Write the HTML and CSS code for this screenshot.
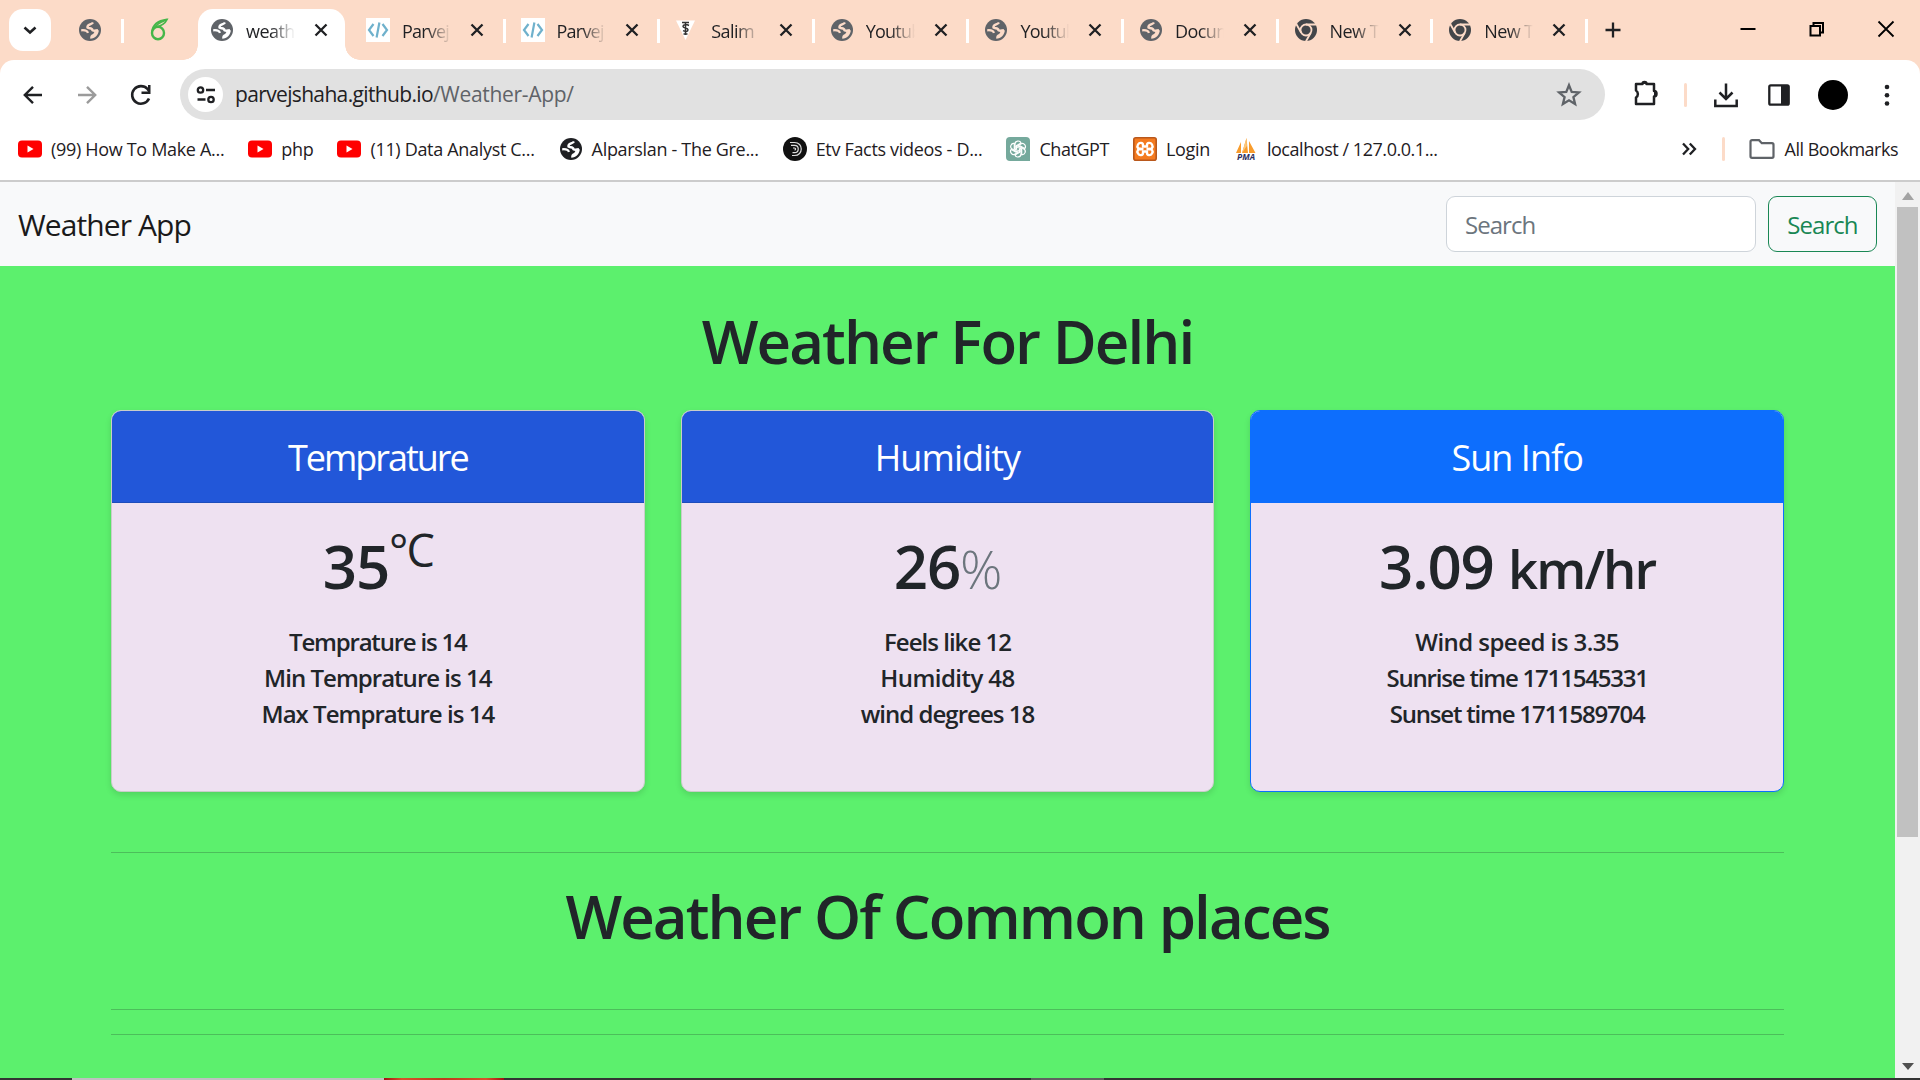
FILE: index.html
```html
<!DOCTYPE html>
<html lang="en">
<head>
<meta charset="utf-8">
<title>weather app</title>
<link rel="stylesheet" href="styles.css">
</head>
<body>
<svg class="defs" aria-hidden="true">
  <symbol id="globe" viewBox="0 0 24 24">
    <circle cx="12" cy="12" r="11" fill="currentColor"/>
    <path class="cutline" d="M15 4.500C13.500 7 9 6 9.500 9.500c1.500 1.300 4.500 0 5 2.700 1.500 1 3.500.5 5.500 0" fill="none" stroke-width="2.400"/>
    <path class="cut" d="M20.800 12.200C20.500 17 17 20.500 12.300 20.800c-.5-2.300.5-4.300 2.700-4.800 1.300-.8.500-3.300 5.800-3.800z"/>
    <path class="cutline" d="M3.200 12.300c3-.3 6-.1 6.700 2.700" fill="none" stroke-width="2.200"/>
  </symbol>
  <symbol id="close" viewBox="0 0 24 24"><path d="M6.500 6.500l11 11M17.500 6.500l-11 11" stroke="#1f2023" stroke-width="2.300" fill="none"/></symbol>
  <symbol id="code" viewBox="0 0 24 24"><path fill="#fff" d="M0 0h24v24H0z"/><path d="M7.500 6L3 12l4.500 6M16.500 6l4.500 6-4.500 6M13.400 4.500l-2.800 15" stroke="#6fb1cc" stroke-width="2.200" fill="none"/></symbol>
  <symbol id="chrome" viewBox="0 0 24 24">
    <circle cx="12" cy="12" r="11" fill="#43464a"/>
    <circle class="cutline" cx="12" cy="12" r="5.500" fill="none" stroke-width="1.800"/>
    <path class="cutline" d="M12 6.500h10M7.200 14.800L2.300 6M16.800 14.700L12 23.300" fill="none" stroke-width="1.800"/>
  </symbol>
  <symbol id="youtube" viewBox="0 0 24 24"><rect y="3.500" width="24" height="17" rx="4" fill="#f00"/><path d="M9.500 8.500v7l6-3.500z" fill="#fff"/></symbol>
</svg>

<header class="browser">
  <div class="tabstrip">
    <div class="tab-search"><svg viewBox="0 0 24 24" width="24" height="24"><path d="M6.500 9.500l5.500 5 5.500-5" fill="none" stroke="#1f2023" stroke-width="2.600"/></svg></div>
    <div class="pinned"><svg class="icon-tab"><use href="#globe"/></svg></div>
    <div class="pinned pinned-last">
      <svg viewBox="0 0 20 24" width="20" height="24" fill="none" stroke="#45b649"><ellipse cx="9" cy="15" rx="6" ry="6.200" stroke-width="2.400"/><path d="M3 14C3.500 8 7 3 18 1.500 16 6 12 8 6.500 9" stroke-width="1.800"/><path d="M16 2.500C12 4 8 6 6 9" stroke-width="1.400"/></svg>
    </div>
    <div class="tab active"><svg class="icon-tab"><use href="#globe"/></svg><span class="tab-title">weather</span><svg class="x"><use href="#close"/></svg></div>
    <div class="tab first"><svg class="icon-tab"><use href="#code"/></svg><span class="tab-title tight">Parvej</span><svg class="x"><use href="#close"/></svg></div>
    <div class="tab"><svg class="icon-tab"><use href="#code"/></svg><span class="tab-title tight">Parvej</span><svg class="x"><use href="#close"/></svg></div>
    <div class="tab"><svg class="icon-tab" viewBox="0 0 24 24"><path d="M1 2.500h19L10.500 22z" fill="#fff"/><path d="M7 4.500h7M14 7.500c-3-1.500-6-1-6 1s5 1 5 3.200-3 2-5 1M10.500 4v13M8.500 16h4" stroke="#333" stroke-width="1.500" fill="none"/></svg><span class="tab-title">Salim</span><svg class="x"><use href="#close"/></svg></div>
    <div class="tab"><svg class="icon-tab"><use href="#globe"/></svg><span class="tab-title tight">Youtube</span><svg class="x"><use href="#close"/></svg></div>
    <div class="tab"><svg class="icon-tab"><use href="#globe"/></svg><span class="tab-title tight">Youtube</span><svg class="x"><use href="#close"/></svg></div>
    <div class="tab"><svg class="icon-tab"><use href="#globe"/></svg><span class="tab-title">Document</span><svg class="x"><use href="#close"/></svg></div>
    <div class="tab"><svg class="icon-tab"><use href="#chrome"/></svg><span class="tab-title">New Tab</span><svg class="x"><use href="#close"/></svg></div>
    <div class="tab"><svg class="icon-tab"><use href="#chrome"/></svg><span class="tab-title">New Tab</span><svg class="x"><use href="#close"/></svg></div>
    <svg class="new-tab" viewBox="0 0 24 24"><path d="M12 4.500v15M4.500 12h15" stroke="#1f2023" stroke-width="2.300"/></svg>
    <div class="window-controls">
      <svg viewBox="0 0 20 20"><path d="M2.500 10h15" stroke="#000" stroke-width="2"/></svg>
      <svg viewBox="0 0 20 20"><path d="M3.500 7h9.500v9.500H3.500zM6.500 7V4H16v9.500h-3" fill="none" stroke="#000" stroke-width="2"/></svg>
      <svg viewBox="0 0 20 20"><path d="M2.500 2.500l15 15M17.500 2.500l-15 15" stroke="#000" stroke-width="1.800"/></svg>
    </div>
  </div>

  <div class="toolbar">
    <div class="nav-buttons">
      <svg viewBox="0 0 24 24"><path d="M21 12H4M12 3.800L3.800 12l8.200 8.200" fill="none" stroke="#1f2023" stroke-width="2.400"/></svg>
      <svg viewBox="0 0 24 24"><path d="M3 12h17M12 3.800l8.200 8.200-8.200 8.200" fill="none" stroke="#9b9b9b" stroke-width="2.400"/></svg>
      <svg viewBox="0 0 24 24"><path d="M20 15.500A8.800 8.800 0 1 1 18.500 6L20 8" fill="none" stroke="#1f2023" stroke-width="2.600"/><path d="M21.500 2v9h-9V8.500H19V2z" fill="#1f2023"/></svg>
    </div>
    <div class="omnibox">
      <span class="site-chip"><svg viewBox="0 0 20 20" width="20" height="20" fill="none" stroke="#1f2023" stroke-width="2.300"><circle cx="4.500" cy="5" r="2.700"/><path d="M10 5h9M1.500 14.500h8"/><circle cx="15" cy="14.500" r="2.700"/></svg></span>
      <span class="url-host">parvejshaha.github.io</span><span class="url-path">/Weather-App/</span>
      <svg class="star" viewBox="0 0 26 26"><path d="M13 3.200l2.700 6.700 7.200.5-5.500 4.700 1.700 7-6.100-3.800-6.100 3.800 1.700-7-5.500-4.700 7.200-.5z" fill="none" stroke="#5f6368" stroke-width="2.300"/></svg>
    </div>
    <svg class="extensions" viewBox="0 0 28 28"><path d="M4 5h6.500c0-1.200.8-2 2-2s2 .8 2 2H22v7c1.600 0 2.500 1.200 2.500 2.800S23.600 17.500 22 17.500V25H4v-6.500c2.500-1.500 2.500-5.500 0-7z" fill="none" stroke="#1f2023" stroke-width="2.500" stroke-linejoin="round"/><path d="M10.500 5V3h4.500v2zM22 11.500l3 2v3l-3 1.500z" fill="#1f2023"/></svg>
    <i class="divider"></i>
    <svg class="download" viewBox="0 0 26 26"><path d="M13 1.500v15M6.500 10.500L13 17l6.500-6.500M2.300 17.500V24h21.400v-6.500" fill="none" stroke="#1f2023" stroke-width="2.500"/></svg>
    <svg class="panel" viewBox="0 0 24 24"><rect x="2.300" y="2.300" width="19.400" height="19.400" rx="1.500" fill="none" stroke="#1f2023" stroke-width="2.300"/><path d="M14 2h7v20h-7z" fill="#1f2023"/></svg>
    <span class="avatar"></span>
    <svg class="menu" viewBox="0 0 6 24"><g fill="#1f2023"><circle cx="3" cy="4" r="2.300"/><circle cx="3" cy="12.200" r="2.300"/><circle cx="3" cy="20.500" r="2.300"/></g></svg>
  </div>

  <div class="bookmarks">
    <a class="bm"><svg class="bm-icon"><use href="#youtube"/></svg><span class="ls-s">(99) How To Make A...</span></a>
    <a class="bm"><svg class="bm-icon"><use href="#youtube"/></svg><span class="ls-s">php</span></a>
    <a class="bm"><svg class="bm-icon"><use href="#youtube"/></svg><span class="ls-s">(11) Data Analyst C...</span></a>
    <a class="bm dark"><svg class="bm-icon"><use href="#globe"/></svg><span class="ls-s">Alparslan - The Gre...</span></a>
    <a class="bm"><svg class="bm-icon" viewBox="0 0 24 24"><circle cx="12" cy="12" r="12" fill="#111"/><path d="M7 5.500h4.500c9 0 9 13 0 13H9M8 8.300h3.500c5 0 5 7.400 0 7.400H9.500M10 11h1.500c1.500 0 1.500 2 0 2" fill="none" stroke="#ddd" stroke-width="1.200"/></svg><span class="ls-s">Etv Facts videos - D...</span></a>
    <a class="bm"><svg class="bm-icon" viewBox="0 0 24 24"><path d="M4 0h16a4 4 0 0 1 4 4v20H4a4 4 0 0 1-4-4V4a4 4 0 0 1 4-4z" fill="#75a99c"/><g fill="none" stroke="#fff" stroke-width="1.200"><path id="petal" d="M9 13.500V7c0-3.500 5-4 6-1l-4.500 2.600v3.400"/><use href="#petal" transform="rotate(60 12 12)"/><use href="#petal" transform="rotate(120 12 12)"/><use href="#petal" transform="rotate(180 12 12)"/><use href="#petal" transform="rotate(240 12 12)"/><use href="#petal" transform="rotate(300 12 12)"/></g></svg><span class="ls-m">ChatGPT</span></a>
    <a class="bm"><svg class="bm-icon" viewBox="0 0 24 24"><rect x=".8" y=".8" width="22.400" height="22.400" rx="2" fill="#f47b20" stroke="#b9581c" stroke-width="1.600"/><path d="M9.500 12C5 13 3.500 10 5 7.500s5-2 5 .5v1.500h4V8c0-2.500 3.500-3 5-.5s0 5.500-4.500 4.500c4.500-1 6 2 4.500 4.500s-5 2-5-.5v-1.500h-4V16c0 2.500-3.500 3-5 .5s0-5.500 4.500-4.500z" fill="none" stroke="#fff" stroke-width="2.400" stroke-linejoin="round"/></svg><span class="ls-s">Login</span></a>
    <a class="bm"><svg class="bm-icon" viewBox="0 0 24 24"><path d="M2 16L7 5v11zM8 16L12.500 1l1.500 15zM15 16V4l6.500 12z" fill="#f89c2c"/><path d="M8 16l4.500-15 .3 8z" fill="#fbc77c"/><text x="12" y="23" text-anchor="middle" class="pma">PMA</text></svg><span class="ls-m">localhost / 127.0.0.1...</span></a>
    <div class="bm-end">
      <svg class="more" viewBox="0 0 16 16"><path d="M2 2.500L7.200 8 2 13.500M8.800 2.500L14 8l-5.200 5.500" fill="none" stroke="#1f2023" stroke-width="2.300"/></svg>
      <i class="divider"></i>
      <svg class="folder" viewBox="0 0 26 22"><path d="M3 2.200h7l2.800 3H23a1.500 1.500 0 0 1 1.500 1.500v11.600a1.500 1.500 0 0 1-1.500 1.500H3a1.500 1.500 0 0 1-1.500-1.500V3.700A1.500 1.500 0 0 1 3 2.200z" fill="none" stroke="#5f6368" stroke-width="2.200"/></svg>
      <span class="ls-all">All Bookmarks</span>
    </div>
  </div>
</header>

<div class="viewport">
  <div class="page">
    <nav class="navbar">
      <span class="brand">Weather App</span>
      <form class="search">
        <span class="field">Search</span>
        <button type="button" class="btn">Search</button>
      </form>
    </nav>
    <main class="content">
      <h1 class="heading">Weather For Delhi</h1>
      <section class="cards">
        <article class="card">
          <h4 class="card-header ls-temp">Temprature</h4>
          <div class="card-body">
            <div class="reading">35<span class="deg">°C</span></div>
            <ul class="facts"><li class="f-a">Temprature is 14</li><li class="f-b">Min Temprature is 14</li><li class="f-b">Max Temprature is 14</li></ul>
          </div>
        </article>
        <article class="card">
          <h4 class="card-header">Humidity</h4>
          <div class="card-body">
            <div class="reading">26<span class="percent">%</span></div>
            <ul class="facts"><li class="f-b">Feels like 12</li><li class="f-c">Humidity 48</li><li class="f-b">wind degrees 18</li></ul>
          </div>
        </article>
        <article class="card primary">
          <h4 class="card-header">Sun Info</h4>
          <div class="card-body">
            <div class="reading">3.09 <span class="unit">km/hr</span></div>
            <ul class="facts"><li class="f-c">Wind speed is 3.35</li><li class="f-a">Sunrise time 1711545331</li><li class="f-a">Sunset time 1711589704</li></ul>
          </div>
        </article>
      </section>
      <hr class="rule">
      <h2 class="heading places">Weather Of Common places</h2>
      <hr class="rule">
      <hr class="rule second">
    </main>
  </div>
  <div class="scrollbar">
    <svg viewBox="0 0 12 8" width="12" height="8"><path d="M6 0l6 8H0z" fill="#a3a3a3"/></svg>
    <div class="thumb"></div>
    <svg viewBox="0 0 12 7" width="12" height="7"><path d="M0 0h12L6 7z" fill="#505050"/></svg>
  </div>
</div>
<div class="taskbar"><i class="tb-search"></i><i class="tb-art"></i><i class="tb-active"></i></div>
</body>
</html>
```
FILE: styles.css
```css
* { box-sizing: border-box; }
body {
  margin: 0;
  width: 1920px;
  height: 1080px;
  overflow: hidden;
  display: flex;
  flex-direction: column;
  font-family: "Open Sans", "Noto Sans", sans-serif;
  color: #212529;
  background: #fff;
}
svg { flex: none; display: block; }
.defs { position: absolute; width: 0; height: 0; }

/* browser frame */
.browser {
  --cut: #fcdbc8;
  flex: none;
  height: 182px;
  border-bottom: 2px solid #ccc;
  background: linear-gradient(#fcdbc8 80px, #fff 80px);
  font-size: 18px;
  color: #1f2023;
}
.cut { fill: var(--cut); }
.cutline { stroke: var(--cut); }
.tabstrip { display: flex; height: 60px; padding: 0 20px 0 9px; }
.tab-search {
  width: 42px; height: 42px; margin-top: 9px;
  display: grid; place-items: center;
  border-radius: 14px; background: #fff;
}
.pinned {
  width: 73px; padding: 18px 0 0 27px;
  border-right: 3px solid transparent;
  border-image: linear-gradient(transparent 19px, #fff 19px 43px, transparent 43px) 1;
  margin-right: 2px;
}
.pinned-last { border-image: none; width: 72px; margin: 0; padding-left: 23px; }
.icon-tab { width: 24px; height: 24px; color: #5f6368; }
.tab {
  flex: none;
  display: flex; align-items: center;
  width: 154.600px; height: 60px;
  padding: 0 0 0 15px;
  border-right: 3px solid transparent;
  border-image: linear-gradient(transparent 19px, #fff 19px 43px, transparent 43px) 1;
}
.tab.first { margin-left: 6px; }
.tab-title {
  width: 49px; margin: 2px 0 0 12px;
  overflow: hidden; white-space: nowrap;
  letter-spacing: -.55px;
  -webkit-mask-image: linear-gradient(90deg, #000 50%, transparent);
  mask-image: linear-gradient(90deg, #000 50%, transparent);
}
.tab-title.tight { letter-spacing: -.8px; }
.x { width: 24px; height: 24px; margin-left: 14px; }
.tab.active {
  --cut: #fff;
  position: relative;
  width: 147px; height: 51px; margin-top: 9px;
  padding: 0 0 9px 12px;
  border: 0; border-radius: 15px 15px 0 0;
  background: #fff;
}
.tab.active::before, .tab.active::after {
  content: ""; position: absolute; bottom: 0; width: 15px; height: 15px;
}
.tab.active::before { left: -15px; background: radial-gradient(circle at 0 0, transparent 14.500px, #fff 15px); }
.tab.active::after { right: -15px; background: radial-gradient(circle at 100% 0, transparent 14.500px, #fff 15px); }
.new-tab { width: 24px; height: 24px; margin: 18px 0 0 13px; }
.window-controls { display: flex; gap: 49px; margin: 19px 4px 0 auto; }
.window-controls svg { width: 20px; height: 20px; }

.toolbar {
  display: flex; align-items: center;
  height: 69px; padding: 0 29px 0 21px;
  border-radius: 14px 14px 0 0; background: #fff;
}
.nav-buttons { display: flex; gap: 30px; width: 159px; }
.nav-buttons svg { width: 24px; height: 24px; }
.omnibox {
  display: flex; align-items: center;
  width: 1425px; height: 51px; padding: 0 23px 0 8px;
  border-radius: 26px; background: #e1e1e1;
  font-size: 21px;
}
.site-chip { display: grid; place-items: center; width: 35px; height: 35px; margin-right: 12px; border-radius: 50%; background: #fff; }
.url-host { letter-spacing: -.65px; }
.url-path { letter-spacing: -.3px; color: #5f6368; }
.url-host, .url-path { margin-top: -2px; }
.star { width: 26px; height: 26px; margin-left: auto; }
.divider { flex: none; width: 3px; height: 24px; border-radius: 2px; background: #fcdbc8; }
.extensions { width: 28px; height: 28px; margin: -3px 24px 0 27px; }
.download { width: 26px; height: 26px; margin: 0 28px 0 26px; }
.panel { width: 24px; height: 24px; }
.avatar { flex: none; width: 30px; height: 30px; margin: 0 21px 0 27px; border-radius: 50%; background: #000; }
.menu { width: 6px; height: 24px; margin-left: 15px; }

.bookmarks { display: flex; align-items: center; gap: 24px; height: 40px; padding: 0 22px 0 18px; }
.bm { display: flex; align-items: center; gap: 9px; white-space: nowrap; line-height: 28px; }
.bm-icon { width: 24px; height: 24px; }
.bm.dark { color: #1f2023; --cut: #fff; }
.ls-s { letter-spacing: -.32px; }
.ls-m { letter-spacing: -.450px; }
.ls-all { letter-spacing: -.5px; }
.pma { font: italic 700 8.500px "Open Sans", sans-serif; fill: #2e2f5e; }
.bm-end { display: flex; align-items: center; margin-left: auto; white-space: nowrap; }
.more { width: 16px; height: 16px; margin-right: 25px; }
.folder { width: 26px; height: 22px; margin: 0 10px 0 24px; }

/* page */
.viewport { flex: none; display: flex; height: 896px; }
.page { width: 1895px; background: #5cf06d; }
.navbar {
  display: flex; align-items: center; justify-content: space-between;
  height: 84px; padding: 0 18px;
  background: #f8f9fa;
}
.brand { font-size: 30px; letter-spacing: -.9px; color: #1a1a1a; }
.search { display: flex; gap: 12px; margin: 0; }
.field, .btn {
  height: 56px; border-radius: 9px; padding: 1px 18px 0;
  font: 24px/54px "Open Sans", sans-serif; letter-spacing: -.950px;
}
.field { width: 310px; border: 1.500px solid #ced4da; background: #fff; color: #6c757d; }
.btn { width: 109px; border: 1.500px solid #198754; background: transparent; color: #198754; }

.content { width: 1673px; margin: 0 auto; padding-top: 39px; }
.heading {
  margin: 0; text-align: center;
  font-size: 60px; font-weight: 560; line-height: 72px; letter-spacing: -1.930px;
}
.cards { display: grid; grid-template-columns: repeat(3, 1fr); gap: 36px; margin: 33px 0 60px; }
.card {
  height: 382px;
  border: 1px solid #c9cdc9; border-radius: 10px;
  background: #eee1f1;
  box-shadow: 0 3px 6px rgba(0, 0, 0, .12);
  text-align: center;
}
.card-header {
  margin: 0; height: 92px; line-height: 94px;
  border-bottom: 1px solid #1d4dbb; border-radius: 9px 9px 0 0;
  background: #2257d9; color: #fff;
  font-size: 36px; font-weight: 400; letter-spacing: -.950px;
}
.ls-temp { letter-spacing: -2.050px; }
.card.primary { border-color: #0d6efd; }
.primary .card-header { background: #0d6efd; border-color: #0d6efd; }
.card-body { padding-top: 27px; }
.reading { height: 72px; font-size: 60px; font-weight: 570; line-height: 72px; letter-spacing: -1.200px; }
.deg { font-size: 45px; font-weight: 400; line-height: 0; vertical-align: 22px; letter-spacing: -1.900px; }
.percent { font-size: 52.500px; font-weight: 300; line-height: 0; color: #6c757d; }
.unit { font-size: 52.500px; line-height: 0; letter-spacing: -1.900px; }
.facts { margin: 22px 0 0; padding: 0; list-style: none; font-size: 24px; font-weight: 550; line-height: 36px; }
.f-a { letter-spacing: -1.200px; }
.f-b { letter-spacing: -.980px; }
.f-c { letter-spacing: -.550px; }
.rule { height: 1px; margin: 0; border: 0; background: #4cbe5b; }
.places { margin: 27px 0 57px; }
.second { margin-top: 24px; }

.scrollbar {
  display: flex; flex-direction: column; align-items: center;
  width: 25px; padding: 10px 0 8px; background: #f1f1f1;
}
.thumb { width: 21px; height: 630px; margin: 7px 0 auto; background: #c1c1c1; }

.taskbar { flex: none; display: flex; height: 2px; padding-left: 72px; background: #333; }
.tb-search { width: 312px; background: #c0c0c0; }
.tb-art { width: 120px; margin-right: 527px; background: linear-gradient(90deg, #a01010, #d9512c 15%, #c03a1c 50%, #d9512c 85%, #a01010); }
.tb-active { width: 73px; background: #606060; }
```
